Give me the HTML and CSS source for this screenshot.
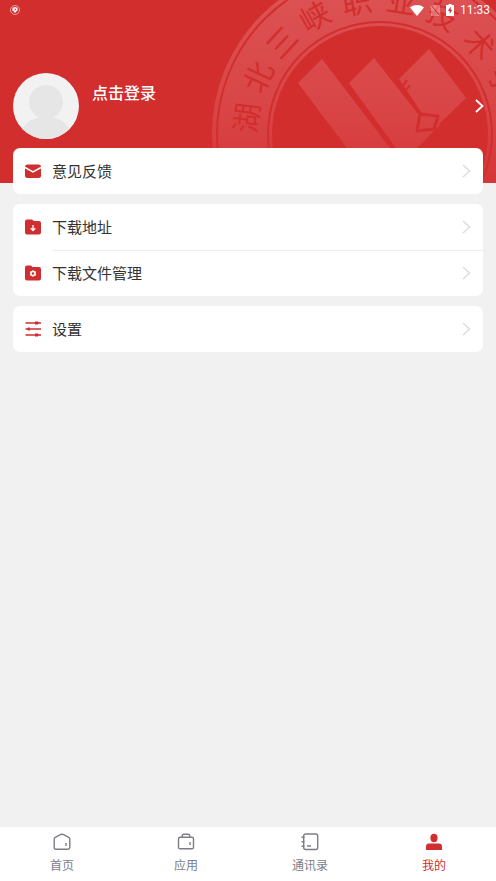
FILE: index.html
```
<!DOCTYPE html>
<html lang="zh-CN">
<head>
  <meta charset="UTF-8">
  <meta name="viewport" content="width=device-width, initial-scale=1.0">
  <title>我的</title>
  <link rel="stylesheet" href="styles.css">
</head>
<body>

  <header class="header">
    <!-- school seal -->
    <svg class="seal" width="296" height="183" viewBox="200 0 296 183" aria-hidden="true">
      <defs>
        <linearGradient id="fade" gradientUnits="userSpaceOnUse" x1="0" y1="0" x2="0" y2="183">
          <stop offset="0" stop-color="#dc5152"/>
          <stop offset="0.6" stop-color="#d94546"/>
          <stop offset="1" stop-color="#d53637"/>
        </linearGradient>
      </defs>
      <circle cx="380" cy="134" r="168" fill="url(#fade)"/>
      <circle cx="380" cy="134" r="163" fill="none" stroke="#d22e2d" stroke-width="2"/>
      <circle cx="380" cy="134" r="112" fill="none" stroke="#d22e2d" stroke-width="2"/>
      <circle cx="380" cy="134" r="108" fill="#d22e2d"/>
      <g fill="url(#fade)">
        <path d="M322 59 298 83 347 148H390Z"/>
        <path d="M374 58 349 83 396 148H417L440 125 418 114Z"/>
        <path d="M429 49 398 80 420 114 438 125 466 98Z"/>
      </g>
      <g fill="none" stroke="#d22e2d" stroke-width="3">
        <path d="M398 80 420 113"/>
        <path d="M403 86l4-6M406 90l4-5" stroke-width="2"/>
        <path d="M420 114 438 116 434 129 417 131Z" stroke-linejoin="round"/>
      </g>
      <g class="seal-text">
        <text x="380" y="11" transform="rotate(-83 380 134)">湖</text>
        <text x="380" y="11" transform="rotate(-65 380 134)">北</text>
        <text x="380" y="11" transform="rotate(-47 380 134)">三</text>
        <text x="380" y="11" transform="rotate(-29 380 134)">峡</text>
        <text x="380" y="11" transform="rotate(-10 380 134)">职</text>
        <text x="380" y="11" transform="rotate(9 380 134)">业</text>
        <text x="380" y="11" transform="rotate(28 380 134)">技</text>
        <text x="380" y="11" transform="rotate(48 380 134)">术</text>
        <text x="380" y="11" transform="rotate(67 380 134)">学</text>
      </g>
    </svg>

    <div class="status">
      <svg width="10" height="10" viewBox="0 0 10 10">
        <circle cx="5" cy="5" r="4.5" fill="none" stroke="#f3bcbc" stroke-width="0.8"/>
        <path d="M2.5 2.7 5 2l2.5.7v2.5L5 8 2.5 5.2Z" fill="#fff"/>
        <path d="M4.2 4h1.6L5 5.6" fill="none" stroke="#d22e2d" stroke-width="0.8"/>
      </svg>
      <div class="status-right">
        <svg width="14" height="11" viewBox="0 0 14 11">
          <path d="M0 2.500C4-.8 10-.8 14 2.500L7 11Z" fill="#fff"/>
        </svg>
        <svg width="10" height="11" viewBox="0 0 10 11">
          <path d="M3.500 0H10V10L2.500 1ZM1 2.500 8 11H1Z" fill="#fff" opacity="0.3"/>
          <path d="M0 1 9 11" stroke="#f0b4b4" stroke-width="0.8"/>
        </svg>
        <svg width="8" height="12" viewBox="0 0 8 12">
          <path d="M2.500 0h3v1H8v11H0V1h2.500Z" fill="#fff"/>
          <path d="M4.700 2.500 2 7h1.700v3L6.200 5.700H4.700Z" fill="#d22e2d"/>
        </svg>
        <span>11:33</span>
      </div>
    </div>

    <a class="profile" href="#">
      <svg class="avatar" width="66" height="66" viewBox="0 0 66 66">
        <defs>
          <clipPath id="round"><circle cx="33" cy="33" r="33"/></clipPath>
        </defs>
        <g clip-path="url(#round)">
          <path d="M0 0h66v66H0Z" fill="#f2f2f2"/>
          <circle cx="33" cy="29" r="17" fill="#e6e6e6"/>
          <path d="M8 58C13 49 20 45 28 44.500h10C46 45 53 49 58 58v8H8Z" fill="#e6e6e6"/>
        </g>
      </svg>
      <span class="login">点击登录</span>
      <svg width="9" height="14" viewBox="0 0 9 14">
        <path d="M1 1 7.500 7 1 13" fill="none" stroke="#fff" stroke-width="1.800"/>
      </svg>
    </a>
  </header>

  <main class="menu">
    <div class="card">
      <a class="row" href="#">
        <svg width="18" height="18" viewBox="0 0 18 18">
          <rect x="1" y="2.500" width="16" height="13.500" rx="2.500" fill="#cf2f31"/>
          <path d="M1 5.500 9 10l8-4.500" fill="none" stroke="#fff" stroke-width="1.500"/>
        </svg>
        <span class="label">意见反馈</span>
        <svg class="arrow" width="9" height="14" viewBox="0 0 9 14"><path d="M1 1 7.500 7 1 13"/></svg>
      </a>
    </div>

    <div class="card">
      <a class="row" href="#">
        <svg width="18" height="18" viewBox="0 0 18 18">
          <path d="M3 1.500h5l2 1.500h5a2 2 0 0 1 2 2v9.500a2 2 0 0 1-2 2H3a2 2 0 0 1-2-2v-11a2 2 0 0 1 2-2Z" fill="#cf2f31"/>
          <path d="M9 7v5.500M6.800 10.300 9 12.500 11.200 10.300" fill="none" stroke="#fff" stroke-width="1.300"/>
        </svg>
        <span class="label">下载地址</span>
        <svg class="arrow" width="9" height="14" viewBox="0 0 9 14"><path d="M1 1 7.500 7 1 13"/></svg>
      </a>
      <a class="row" href="#">
        <svg width="18" height="18" viewBox="0 0 18 18">
          <path d="M3 1.500h4l1.500 1.500H15a2 2 0 0 1 2 2v9.500a2 2 0 0 1-2 2H3a2 2 0 0 1-2-2v-11a2 2 0 0 1 2-2Z" fill="#cf2f31"/>
          <circle cx="9" cy="9.500" r="2" fill="none" stroke="#fff" stroke-width="1.600"/>
          <path d="M9 6.200v1.200M9 11.600v1.200M6.100 7.800l1.100.7M10.800 10.500l1.100.7M11.900 7.800l-1.100.7M7.200 10.500l-1.100.7" stroke="#fff" stroke-width="1.200"/>
        </svg>
        <span class="label">下载文件管理</span>
        <svg class="arrow" width="9" height="14" viewBox="0 0 9 14"><path d="M1 1 7.500 7 1 13"/></svg>
      </a>
    </div>

    <div class="card">
      <a class="row" href="#">
        <svg width="18" height="18" viewBox="0 0 18 18">
          <path d="M1.500 3h15.500M1.500 9h15.500M1.500 15h15.500" stroke="#cf2f31" stroke-width="1.400"/>
          <path d="M11 1.500h3L15 3l-1 1.500h-3ZM4 7.500h2V10.500H4L3 9ZM11 13.500h3l1 1.500-1 1.500h-3Z" fill="#cf2f31"/>
        </svg>
        <span class="label">设置</span>
        <svg class="arrow" width="9" height="14" viewBox="0 0 9 14"><path d="M1 1 7.500 7 1 13"/></svg>
      </a>
    </div>
  </main>

  <nav class="tabs">
    <a class="tab" href="#">
      <svg width="18" height="18" viewBox="0 0 18 18" fill="none" stroke="currentColor" stroke-width="1.400">
        <path d="M1.200 6.200Q1.200 5 2.300 4.400L7.800 1.500Q9 1 10.200 1.500l5.500 2.900q1.100.6 1.100 1.800V14.500q0 1.700-1.700 1.700H2.900q-1.700 0-1.700-1.700Z"/>
        <path d="M13 10v3"/>
      </svg>
      <span>首页</span>
    </a>
    <a class="tab" href="#">
      <svg width="18" height="18" viewBox="0 0 18 18" fill="none" stroke="currentColor" stroke-width="1.400">
        <rect x="1.500" y="4.200" width="15" height="11.600" rx="1.600"/>
        <path d="M5.200 4V3q0-1.700 1.700-1.700h4.200q1.700 0 1.700 1.700v1M13 9v3"/>
      </svg>
      <span>应用</span>
    </a>
    <a class="tab" href="#">
      <svg width="18" height="18" viewBox="0 0 18 18" fill="none" stroke="currentColor" stroke-width="1.400">
        <rect x="2.700" y="1" width="14" height="15.500" rx="2"/>
        <path d="M.5 4.200h3M.5 8.700h3M.5 13.200h3M6 13h4"/>
      </svg>
      <span>通讯录</span>
    </a>
    <a class="tab active" href="#">
      <svg width="18" height="18" viewBox="0 0 18 18" fill="currentColor">
        <ellipse cx="9" cy="5" rx="3.600" ry="4.200"/>
        <path d="M1 17v-3.500Q1 10.500 4 10.500h10q3 0 3 3V17Z"/>
      </svg>
      <span>我的</span>
    </a>
  </nav>

</body>
</html>
```
FILE: styles.css
```
* {
  box-sizing: border-box;
}

body {
  margin: 0;
  min-height: 100vh;
  display: flex;
  flex-direction: column;
  background: #f1f1f1;
  color: #333;
  font-family: "Noto Sans CJK SC", sans-serif;
}

a {
  color: inherit;
  text-decoration: none;
}

svg {
  display: block;
  flex: none;
}

/* Header */
.header {
  position: relative;
  height: 183px;
  background: #d22e2d;
  color: #fff;
}

.seal {
  position: absolute;
  top: 0;
  right: 0;
}

.seal-text {
  fill: #d22e2d;
  font-size: 30px;
  text-anchor: middle;
}

.status {
  position: relative;
  display: flex;
  justify-content: space-between;
  align-items: center;
  height: 20px;
  padding: 0 6px 0 10px;
  font: 12px/20px Roboto, sans-serif;
}

.status-right {
  display: flex;
  align-items: center;
  gap: 6px;
}

.profile {
  position: relative;
  display: flex;
  align-items: center;
  margin-top: 53px;
  padding: 0 12px 0 13px;
}

.login {
  flex: 1;
  align-self: flex-start;
  margin-left: 13px;
  padding-top: 7px;
  font-size: 16px;
  line-height: 24px;
  font-weight: 500;
}

/* Menu cards */
.menu {
  position: relative;
  flex: 1;
  display: flex;
  flex-direction: column;
  gap: 10px;
  margin-top: -35px;
  padding: 0 13px 10px;
}

.card {
  background: #fff;
  border-radius: 7px;
}

.row {
  display: flex;
  align-items: center;
  height: 46px;
  padding-left: 11px;
}

.label {
  flex: 1;
  margin-left: 10px;
  font-size: 15px;
  line-height: 46px;
}

.arrow {
  margin-right: 12px;
  fill: none;
  stroke: #dcdde1;
  stroke-width: 1.5;
}

.row + .row {
  background: linear-gradient(#ececec, #ececec) 40px 0 / 100% 1px no-repeat;
}

/* Bottom tabs */
.tabs {
  display: flex;
  background: #fff;
}

.tab {
  flex: 1;
  display: flex;
  flex-direction: column;
  align-items: center;
  gap: 5px;
  padding: 6px 0 7px;
  color: #7d7d88;
  font-size: 12px;
  line-height: 18px;
}

.tab.active {
  color: #cf2f31;
}
```
